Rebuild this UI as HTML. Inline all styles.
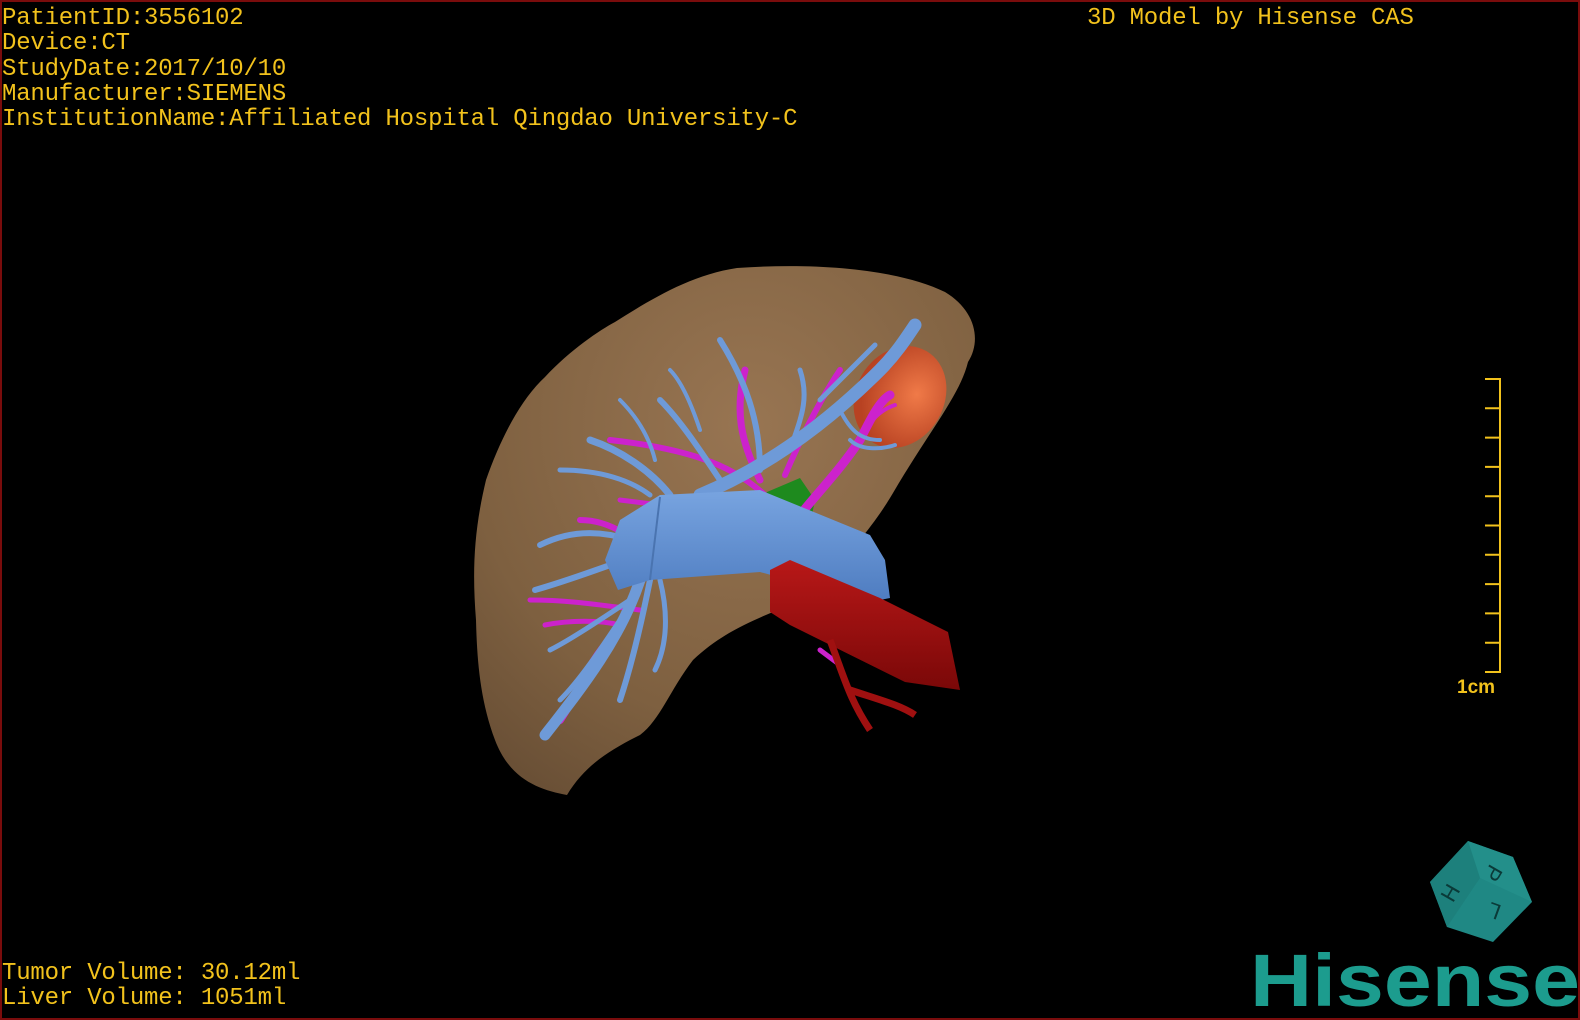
<!DOCTYPE html>
<html><head><meta charset="utf-8"><style>
html,body{margin:0;padding:0;background:#000;}
#w{position:relative;width:1580px;height:1020px;background:#000;box-sizing:border-box;border:2px solid #7a0c0c;overflow:hidden;}
.t{position:absolute;font-family:"Liberation Mono",monospace;font-size:24px;line-height:25.3px;color:#f2c21c;white-space:pre;letter-spacing:-0.2px;}
</style></head><body><div id="w">
<div class="t" style="left:0;top:4px">PatientID:3556102
Device:CT
StudyDate:2017/10/10
Manufacturer:SIEMENS
InstitutionName:Affiliated Hospital Qingdao University-C</div>
<div class="t" style="left:1085px;top:4px">3D Model by Hisense CAS</div>
<div class="t" style="left:0;top:959px">Tumor Volume: 30.12ml
Liver Volume: 1051ml</div>
<svg width="1580" height="1020" style="position:absolute;left:-2px;top:-2px">
<defs>
<radialGradient id="lv" cx="0.55" cy="0.3" r="0.8"><stop offset="0" stop-color="#987552"/><stop offset="0.7" stop-color="#7e6040"/><stop offset="1" stop-color="#6a5036"/></radialGradient>
<radialGradient id="tm" cx="0.65" cy="0.4" r="0.6"><stop offset="0" stop-color="#f07a48"/><stop offset="1" stop-color="#b84222"/></radialGradient>
<linearGradient id="iv" x1="0" y1="0" x2="0" y2="1"><stop offset="0" stop-color="#78a4e0"/><stop offset="1" stop-color="#4e7cc0"/></linearGradient>
<linearGradient id="rv" x1="0" y1="0" x2="0" y2="1"><stop offset="0" stop-color="#b81818"/><stop offset="1" stop-color="#7a0808"/></linearGradient>
</defs>
<path d="M737,268 C820,262 900,270 945,292 C975,310 982,340 968,362 C960,395 930,430 893,493 C880,515 870,527 860,540 L800,600 C770,615 730,625 693,660 C670,690 660,720 640,735 C610,750 585,765 567,795 C540,790 510,780 495,740 C480,700 477,660 476,620 C472,570 474,530 486,480 C500,440 520,400 545,377 C570,350 600,330 615,322 C650,300 690,275 737,268 Z" fill="url(#lv)"/>
<ellipse cx="900" cy="397" rx="44" ry="53" transform="rotate(30 900 397)" fill="url(#tm)"/>
<path d="M760,495 L800,478 L815,500 L810,525 L775,515 Z" fill="#1e8a1e"/>
<g fill="none" stroke="#cc22cc" stroke-linecap="round">
<path d="M800,515 C820,490 840,470 860,440 C870,420 880,400 890,395" stroke-width="9"/>
<path d="M770,500 C740,470 700,450 610,440" stroke-width="6"/>
<path d="M760,480 C740,440 735,410 745,370" stroke-width="7"/>
<path d="M785,475 C800,440 820,400 840,370" stroke-width="6"/>
<path d="M620,500 L660,505" stroke-width="5"/>
<path d="M580,520 C610,520 640,540 650,560" stroke-width="6"/>
<path d="M530,600 C570,600 600,605 640,610" stroke-width="5"/>
<path d="M545,625 C570,620 600,620 620,625" stroke-width="5"/>
<path d="M560,720 C580,690 590,660 610,640" stroke-width="8"/>
<path d="M860,440 C870,420 880,410 895,405" stroke-width="4"/>
<path d="M820,650 L840,665" stroke-width="5"/>
</g>
<g fill="none" stroke="#6e9ad8" stroke-linecap="round">
<path d="M700,495 C760,470 820,430 880,370 C895,355 905,340 915,325" stroke-width="13"/>
<path d="M760,470 C760,420 745,380 720,340" stroke-width="6"/>
<path d="M790,450 C800,420 810,400 800,370" stroke-width="5"/>
<path d="M720,480 C700,450 680,420 660,400" stroke-width="6"/>
<path d="M670,495 C650,470 620,450 590,440" stroke-width="7"/>
<path d="M650,495 C630,480 600,470 560,470" stroke-width="5"/>
<path d="M630,540 C600,530 570,530 540,545" stroke-width="6"/>
<path d="M625,560 C595,570 570,580 535,590" stroke-width="6"/>
<path d="M640,580 C620,640 580,690 545,735" stroke-width="11"/>
<path d="M650,580 C640,630 630,670 620,700" stroke-width="6"/>
<path d="M660,580 C670,620 665,650 655,670" stroke-width="5"/>
<path d="M630,600 C600,620 570,640 550,650" stroke-width="5"/>
<path d="M620,620 C600,650 580,680 560,700" stroke-width="5"/>
<path d="M840,410 C850,430 860,440 880,440" stroke-width="4"/>
<path d="M820,400 C840,380 860,360 875,345" stroke-width="5"/>
<path d="M850,440 C860,450 880,450 895,445" stroke-width="4"/>
<path d="M620,400 C640,420 650,440 655,460" stroke-width="4"/>
<path d="M700,430 C690,400 680,380 670,370" stroke-width="4"/>
</g>
<path d="M620,520 L660,495 L760,490 L870,535 L885,560 L890,598 L870,602 L760,572 L650,580 L618,590 L605,560 Z" fill="url(#iv)"/>
<path d="M660,497 L650,580" stroke="#4a74b0" stroke-width="2" fill="none"/>
<path d="M770,570 L790,560 L880,598 L948,632 L960,690 L905,682 L790,625 L770,612 Z" fill="url(#rv)"/>
<path d="M830,640 C845,680 850,700 870,730 M850,690 C880,700 900,705 915,715" stroke="#a01010" stroke-width="7" fill="none"/>
<g stroke="#f2c21c" stroke-width="2" fill="none">
<path d="M1485,379 H1500 V672 H1485"/>
<path d="M1485,408.3 H1500 M1485,437.6 H1500 M1485,466.9 H1500 M1485,496.2 H1500 M1485,525.5 H1500 M1485,554.8 H1500 M1485,584.1 H1500 M1485,613.4 H1500 M1485,642.7 H1500"/>
</g>
<text x="1457" y="693" font-family="Liberation Sans,sans-serif" font-size="19" font-weight="bold" fill="#f2c21c">1cm</text>
<polygon points="1468,841 1513,857 1532,902 1493,942 1447,927 1430,882" fill="#1f8884"/>
<polygon points="1468,841 1513,857 1532,902 1480,878" fill="#238f8a"/>
<polygon points="1430,882 1468,841 1480,878 1447,927" fill="#1d807c"/>
<text x="1485" y="878" font-family="Liberation Sans,sans-serif" font-size="22" fill="#0a3a38" transform="rotate(120 1492 872)">P</text>
<text x="1445" y="900" font-family="Liberation Sans,sans-serif" font-size="22" fill="#0a3a38" transform="rotate(-60 1452 895)">H</text>
<text x="1492" y="920" font-family="Liberation Sans,sans-serif" font-size="22" fill="#0a3a38" transform="rotate(200 1496 912)">L</text>
<text x="1250" y="1006" font-family="Liberation Sans,sans-serif" font-size="74" font-weight="bold" fill="#1c9c8e" textLength="330" lengthAdjust="spacingAndGlyphs">Hisense</text>
</svg>
</div></body></html>
